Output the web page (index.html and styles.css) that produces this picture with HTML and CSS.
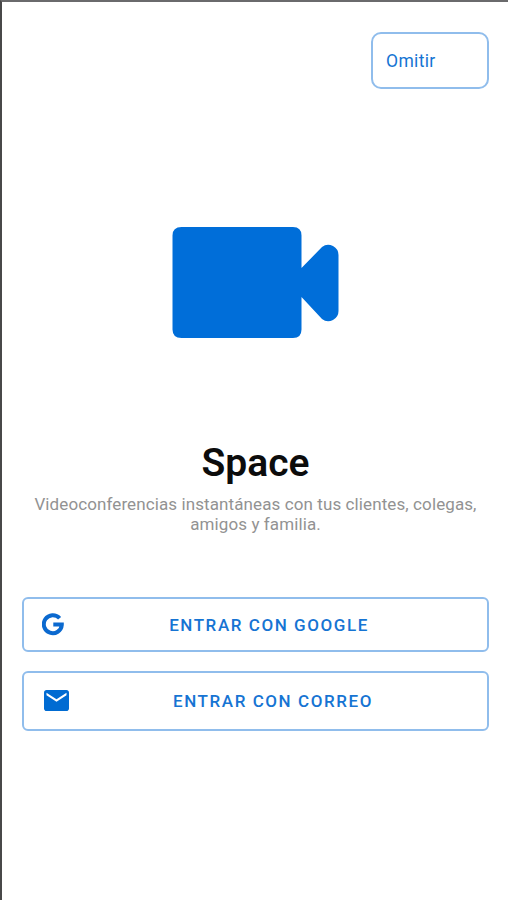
FILE: index.html
```html
<!DOCTYPE html>
<html lang="es">
<head>
<meta charset="utf-8">
<title>Space</title>
<link rel="stylesheet" href="styles.css">
</head>
<body>
<main class="screen">
  <header class="top"><button class="btn skip">Omitir</button></header>
  <svg class="camera" viewBox="0 0 168 114" aria-hidden="true">
    <path d="M9.500 1H121Q129.500 1 129.500 9.500V42L150 21Q155 17 161 20Q166.500 23 166.500 29V85Q166.500 91 161 94Q155 97 150 93L129.500 71V103.500Q129.500 112 121 112H9.500Q.5 112 .5 103.500V9.500Q.5 1 9.500 1Z"/>
  </svg>
  <h1 class="title">Space</h1>
  <p class="lead">Videoconferencias instantáneas con tus clientes, colegas,<br>amigos y familia.</p>
  <div class="actions">
    <button class="btn login google">
      <svg class="icon-g" viewBox="0 0 22 23" aria-hidden="true"><path d="M17.600 5.300A9 9 0 1 0 19.800 11.900V11.400H11.300" /></svg>
      <span class="label">ENTRAR CON GOOGLE</span>
    </button>
    <button class="btn login mail">
      <svg class="icon-mail" viewBox="2 4 20 16" preserveAspectRatio="none" aria-hidden="true"><path d="M20 4H4c-1.100 0-1.990.9-1.990 2L2 18c0 1.100.9 2 2 2h16c1.100 0 2-.9 2-2V6c0-1.100-.9-2-2-2zm0 4l-8 5-8-5V6l8 5 8-5v2z"/></svg>
      <span class="label">ENTRAR CON CORREO</span>
    </button>
  </div>
</main>
</body>
</html>
```
FILE: styles.css
```css
* { box-sizing: border-box; }
body { margin: 0; background: #fff; font-family: Roboto, sans-serif; }
.screen {
  height: 900px;
  overflow: hidden;
  border-left: 2px solid #484849;
  border-top: 2px solid #6a6a6c;
  padding: 30px 19px 0 20px;
  display: flex;
  flex-direction: column;
}
.top { display: flex; justify-content: flex-end; }
.btn {
  font-family: inherit;
  color: #1674d3;
  background: #fff;
  border: 2px solid #90bdec;
  border-radius: 6px;
}
.skip {
  width: 118px;
  height: 57px;
  padding: 0 13px;
  text-align: left;
  font-size: 17.5px;
  letter-spacing: .35px;
  border-radius: 10px;
}
.camera { width: 168px; height: 114px; margin: 137px 0 0 150px; fill: #006ed9; }
.title {
  margin: 99px 0 0;
  height: 48px;
  line-height: 48px;
  font-size: 39px;
  font-weight: 600;
  text-align: center;
  color: #0c0c0c;
}
.lead {
  margin: 7px -10px 0;
  font-size: 17px;
  letter-spacing: .1px;
  line-height: 20px;
  text-align: center;
  color: #929292;
}
.actions { display: flex; flex-direction: column; gap: 19px; margin-top: 63px; }
.login { display: flex; align-items: center; padding: 0 13px 0 18px; }
.google { height: 55px; }
.mail { height: 60px; padding-right: 10px; }
.icon-g { width: 22px; height: 23px; fill: none; stroke: #0b69cf; stroke-width: 4; }
.icon-mail { width: 25px; height: 21px; margin: -2px 0 0 2px; fill: #006bd2; }
.label { flex: 1; text-align: center; font-size: 17px; font-weight: 500; letter-spacing: 1.560px; }
```
